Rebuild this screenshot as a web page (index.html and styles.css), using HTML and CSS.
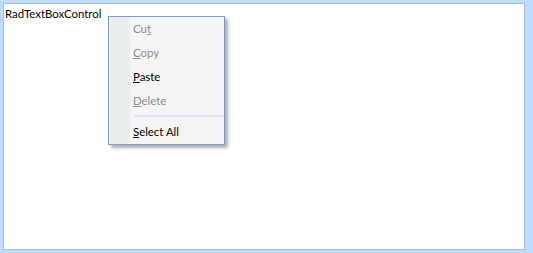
FILE: index.html
```html
<!DOCTYPE html>
<html lang="en">
<head>
    <meta charset="UTF-8">
    <meta name="viewport" content="width=device-width, initial-scale=1.0">
    <title>RadTextBoxControl</title>
    <link rel="stylesheet" href="styles.css">
</head>
<body>
    <div class="text-box">
        <span class="text-value">RadTextBoxControl</span>

        <div class="context-menu">
            <div class="menu-item disabled">Cu<u>t</u></div>
            <div class="menu-item disabled"><u>C</u>opy</div>
            <div class="menu-item"><u>P</u>aste</div>
            <div class="menu-item disabled"><u>D</u>elete</div>
            <div class="menu-separator"></div>
            <div class="menu-item"><u>S</u>elect All</div>
        </div>
    </div>
</body>
</html>
```

FILE: styles.css
```css
body {
    margin: 0;
    padding: 3px;
    width: 522px;
    height: 247px;
    background-color: #bfdbff;
    font-family: Lato, "Open Sans", sans-serif;
    font-size: 11.4px;
}
.text-box {
    position: relative;
    height: 100%;
    box-sizing: border-box;
    background-color: #fff;
    border: 1px solid #9fbde6;
    padding: 3px 1px;
}
.text-value {
    color: #000;
    line-height: 14px;
}
.context-menu {
    position: absolute;
    left: 104px;
    top: 12px;
    width: 115px;
    border: 1px solid #7c9cc9;
    background: linear-gradient(to right, #e9eeee 0, #e9eeee 21px, #f5f5f5 21px);
    box-shadow: 3px 3px 3px rgba(0, 0, 0, 0.3);
}
.menu-item {
    height: 24px;
    line-height: 24px;
    padding-left: 24px;
    color: #000;
}
.menu-item.disabled {
    color: #8d8d8d;
}
.menu-separator {
    height: 5px;
    margin-left: 25px;
}
.menu-separator::after {
    content: "";
    display: block;
    height: 2px;
    margin-top: 2px;
    background-color: #dde8f6;
}
```
